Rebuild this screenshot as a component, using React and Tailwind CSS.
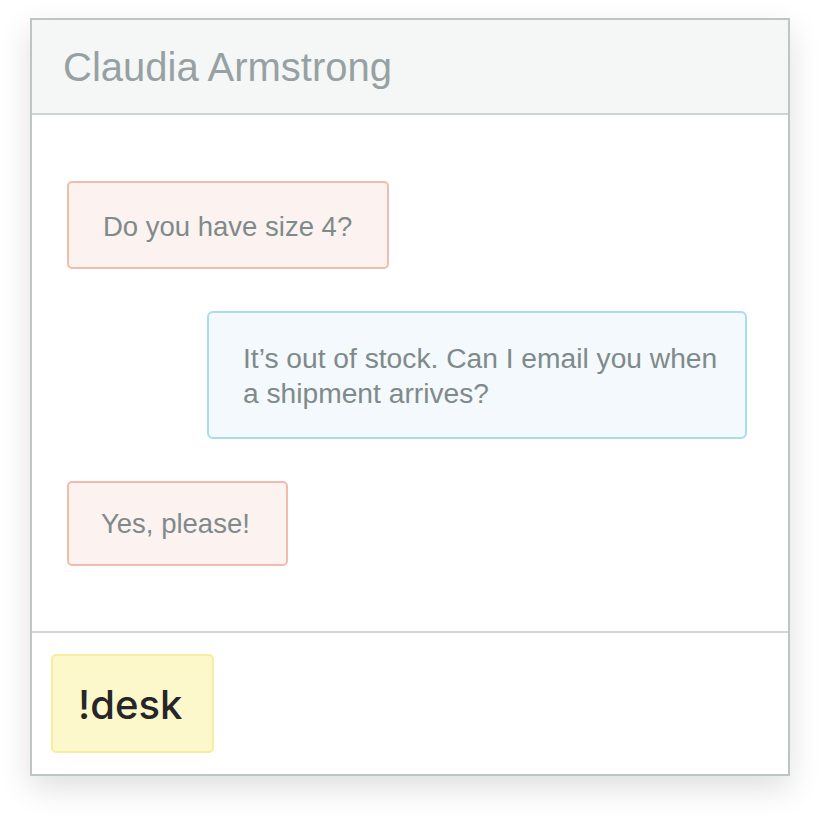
import React from "react";

export default function App() {
  const font = { fontFamily: '"Liberation Sans", Arial, sans-serif' };
  return (
    <div className="w-[820px] h-[820px] bg-white" style={font}>
      <div className="pt-[18px] pl-[30px]">
        <div className="w-[760px] h-[758px] border-2 border-[#bec5c7] bg-white flex flex-col shadow-[0_12px_30px_rgba(0,0,0,0.13)]">
          <div className="h-[95px] bg-[#f5f7f7] border-b-2 border-[#ced3d4] flex items-center pl-[31px]">
            <span className="text-[40px] leading-none text-[#97a1a3]">Claudia Armstrong</span>
          </div>
          <div className="flex-1 flex flex-col pt-[66px] gap-[42px]">
            <div className="ml-[35px] w-[322px] h-[88px] box-border border-2 border-[#f1bcae] bg-[#fcf2f0] rounded-[5px] flex items-center pl-[34px] pt-[3px] text-[27.5px] text-[#7f8a8b]">
              Do you have size 4?
            </div>
            <div className="ml-[175px] w-[540px] h-[128px] box-border border-2 border-[#a8dcef] bg-[#f3f9fc] rounded-[6px] flex items-center pl-[34px] pr-[10px] pt-[2px] text-[28.2px] leading-[35px] text-[#7f8a8b]">
              It’s out of stock. Can I email you when a shipment arrives?
            </div>
            <div className="ml-[35px] w-[221px] h-[85px] box-border border-2 border-[#f1bcae] bg-[#fcf2f0] rounded-[5px] flex items-center pl-[32px] text-[27.5px] text-[#7f8a8b]">
              Yes, please!
            </div>
          </div>
          <div className="h-[143px] border-t-2 border-[#d2d6d6] pt-[21px] pl-[19px]">
            <div className="w-[163px] h-[99px] box-border border-2 border-[#f6ee9e] bg-[#fcf8cc] rounded-[5px] flex items-center pl-[25px] pt-[2px]">
              <span className="text-[40px] leading-none font-medium text-[#262626]" style={{ fontFamily: 'Inter, "Liberation Sans", sans-serif' }}>!desk</span>
            </div>
          </div>
        </div>
      </div>
    </div>
  );
}
